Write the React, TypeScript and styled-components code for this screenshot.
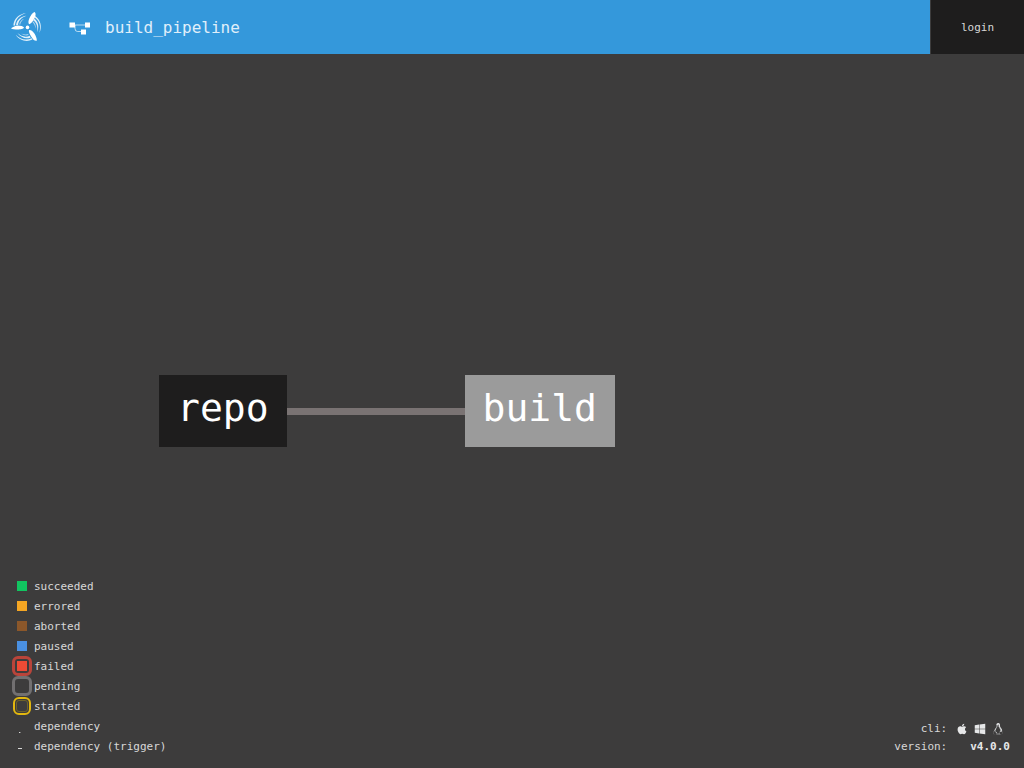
import React from "react";
import styled, { createGlobalStyle, css } from "styled-components";
import { FaApple, FaLinux, FaWindows } from "react-icons/fa";

const mono = `"DejaVu Sans Mono", "Liberation Mono", monospace`;

const GlobalStyle = createGlobalStyle`
  *, *::before, *::after { box-sizing: border-box; }
  body { margin: 0; background: #3d3c3c; color: #d8d8d8; font: 11px/20px ${mono}; }
  a { color: inherit; text-decoration: none; }
`;

const Page = styled.div`
  display: flex;
  flex-direction: column;
  min-height: 100vh;
`;

const TopBar = styled.header`
  display: flex;
  height: 54px;
  background: #3498db;
`;

const HomeLink = styled.a`
  display: flex;
  width: 54px;
  align-items: center;
  justify-content: center;
`;

const Breadcrumb = styled.a`
  display: flex;
  flex: 1;
  align-items: center;
  gap: 14px;
  padding: 2px 0 0 14px;
  font-size: 16px;
  && { color: #e0effa; }
`;

const LoginButton = styled.button`
  width: 94px;
  padding: 2px 0 0;
  border: 0;
  border-left: 1px solid #3d3c3c;
  background: #1e1d1d;
  color: #d8d8d8;
  font: 11px/20px ${mono};
  cursor: pointer;
`;

const Main = styled.main`
  display: grid;
  flex: 1;
  grid-template: 1fr / 1fr;
`;

const Graph = styled.section`
  display: flex;
  grid-area: 1 / 1;
  align-items: center;
  padding-left: 159px;
`;

const Node = styled.a<{ $kind: "resource" | "job" }>`
  height: 72px;
  padding: 0 18px;
  background: ${(p) => (p.$kind === "job" ? "#9b9b9b" : "#1e1d1d")};
  && { color: #fff; }
  font-size: 38px;
  line-height: 66px;
`;

const Edge = styled.div`
  width: 178px;
  height: 7px;
  background: #7a7373;
`;

const Overlay = styled.footer`
  display: flex;
  grid-area: 1 / 1;
  align-self: end;
  align-items: flex-end;
  justify-content: space-between;
  padding: 0 14px 12px 12px;
`;

const Legend = styled.ul`
  margin: 0;
  padding: 0;
  list-style: none;
`;

const LegendRow = styled.li`
  display: flex;
  align-items: center;
  gap: 2px;
  height: 20px;
`;

const LegendLabel = styled.span`
  padding-top: 2px;
`;

const Mark = styled.span<{ $fill?: string; $ring?: string; $thin?: boolean }>`
  display: flex;
  width: 20px;
  height: 20px;
  align-items: center;
  justify-content: center;
  ${(p) =>
    p.$ring &&
    css`
      border: ${p.$thin ? 2 : 3}px solid ${p.$ring};
      border-radius: 6px;
    `}
  ${(p) =>
    p.$thin &&
    css`
      width: 18px;
      height: 18px;
      margin: 0 1px;
    `}
  &::before {
    width: ${(p) => (p.$thin ? 12 : 10)}px;
    height: ${(p) => (p.$thin ? 12 : 10)}px;
    border: ${(p) => (p.$thin ? "1px solid #6f632b" : "0")};
    border-radius: ${(p) => (p.$thin ? 3 : 0)}px;
    background: ${(p) => p.$fill ?? "transparent"};
    content: "";
  }
`;

const LineMark = styled.svg`
  width: 20px;
  height: 20px;
`;

const Info = styled.dl`
  display: grid;
  grid-template-columns: auto auto;
  column-gap: 9px;
  margin: 0;
  line-height: 18px;
`;

const Term = styled.dt`
  text-align: right;
`;

const Detail = styled.dd`
  display: flex;
  align-items: center;
  margin: 0;
  color: #e6e7e8;
`;

const Downloads = styled(Detail)`
  gap: 6px;
  font-size: 12px;
`;

const Version = styled(Detail)`
  padding-left: 14px;
  font-weight: 700;
`;

const IconLink = styled.a`
  display: flex;
`;

const states: { label: string; fill?: string; ring?: string; thin?: boolean }[] = [
  { label: "succeeded", fill: "#11c560" },
  { label: "errored", fill: "#f5a623" },
  { label: "aborted", fill: "#8b572a" },
  { label: "paused", fill: "#4a90e2" },
  { label: "failed", fill: "#ed4b35", ring: "#b9443a" },
  { label: "pending", ring: "#727071" },
  { label: "started", ring: "#e2b70f", thin: true },
];

const Logo = () => (
  <svg width="34" height="34" viewBox="-17 -17 34 34" aria-hidden="true">
    <circle cx="0.5" cy="0.4" r="1.8" fill="#fff" />
    <g fill="#fff">
      <path d="M-16 1.2C-13.500.2-12-1.500-9.500-1.500-6.500-1.500-3.500-.8-3 .6-3.500 2.300-6.500 2.500-9 2.500-12 2.500-15 2.300-16 1.200Z" />
      <path d="M7.800-15C9-13.500 8.800-11.500 7.800-9.500 6.600-6.800 4.500-3.400 2.400-2.800 1-3.300 1.200-6 2.400-8.800 3.600-11.500 5.500-14.500 7.800-15Z" />
      <path d="M9.800 13.800C7.800 14.200 6.200 12.800 5 10.800 3.400 8.200 1.400 4.800 2 3.200 3.400 2.400 6 4.200 7.400 6.600 8.800 9 10 11.500 9.800 13.800Z" />
    </g>
    {[0, 120, 240].map((angle) => (
      <g key={angle} transform={`rotate(${angle})`} fill="#fff" opacity="0.85">
        <path d="M-13.600-1.500C-13.200-8-8-13.300-1-13.700-7.500-12-11.500-8-12-1.500Z" />
        <path d="M-10.900-2C-10.500-7-6-10.900-.5-11.300-5.400-9.600-8.700-6.400-8.900-2Z" />
        <path d="M-7.800-2.600C-7.500-5-5.500-7.500-2.800-8.200-5-6.500-6.400-4.600-6.700-2.600Z" opacity="0.7" />
      </g>
    ))}
  </svg>
);

const PipelineIcon = () => (
  <svg width="23" height="14" viewBox="0 0 23 14" aria-hidden="true">
    <path d="M6 4H18M7 4V7.500Q7 10.500 9.500 10.500H13" fill="none" stroke="#fff" opacity="0.65" />
    <path d="M1.500 1.500h5.500v5h-5.500zM17 1.500h5v5h-5zM13 8.500h5v5h-5z" fill="#fff" />
  </svg>
);

export default function App() {
  return (
    <Page>
      <GlobalStyle />
      <TopBar>
        <HomeLink href="#" aria-label="Home">
          <Logo />
        </HomeLink>
        <Breadcrumb href="#build_pipeline">
          <PipelineIcon />
          build_pipeline
        </Breadcrumb>
        <LoginButton type="button">login</LoginButton>
      </TopBar>
      <Main>
        <Graph aria-label="Pipeline">
          <Node href="#repo" $kind="resource">repo</Node>
          <Edge />
          <Node href="#build" $kind="job">build</Node>
        </Graph>
        <Overlay>
          <Legend>
            {states.map((s) => (
              <LegendRow key={s.label}>
                <Mark $fill={s.fill} $ring={s.ring} $thin={s.thin} />
                <LegendLabel>{s.label}</LegendLabel>
              </LegendRow>
            ))}
            <LegendRow>
              <LineMark viewBox="0 0 20 20" aria-hidden="true">
                <path d="M7 16.500h1.400" stroke="#d8d8d8" />
              </LineMark>
              <LegendLabel>dependency</LegendLabel>
            </LegendRow>
            <LegendRow>
              <LineMark viewBox="0 0 20 20" aria-hidden="true">
                <path d="M6 12.500h4" stroke="#d8d8d8" />
              </LineMark>
              <LegendLabel>dependency (trigger)</LegendLabel>
            </LegendRow>
          </Legend>
          <Info>
            <Term>cli:</Term>
            <Downloads>
              <IconLink href="#darwin" aria-label="macOS"><FaApple /></IconLink>
              <IconLink href="#windows" aria-label="Windows"><FaWindows /></IconLink>
              <IconLink href="#linux" aria-label="Linux"><FaLinux /></IconLink>
            </Downloads>
            <Term>version:</Term>
            <Version>v4.0.0</Version>
          </Info>
        </Overlay>
      </Main>
    </Page>
  );
}
